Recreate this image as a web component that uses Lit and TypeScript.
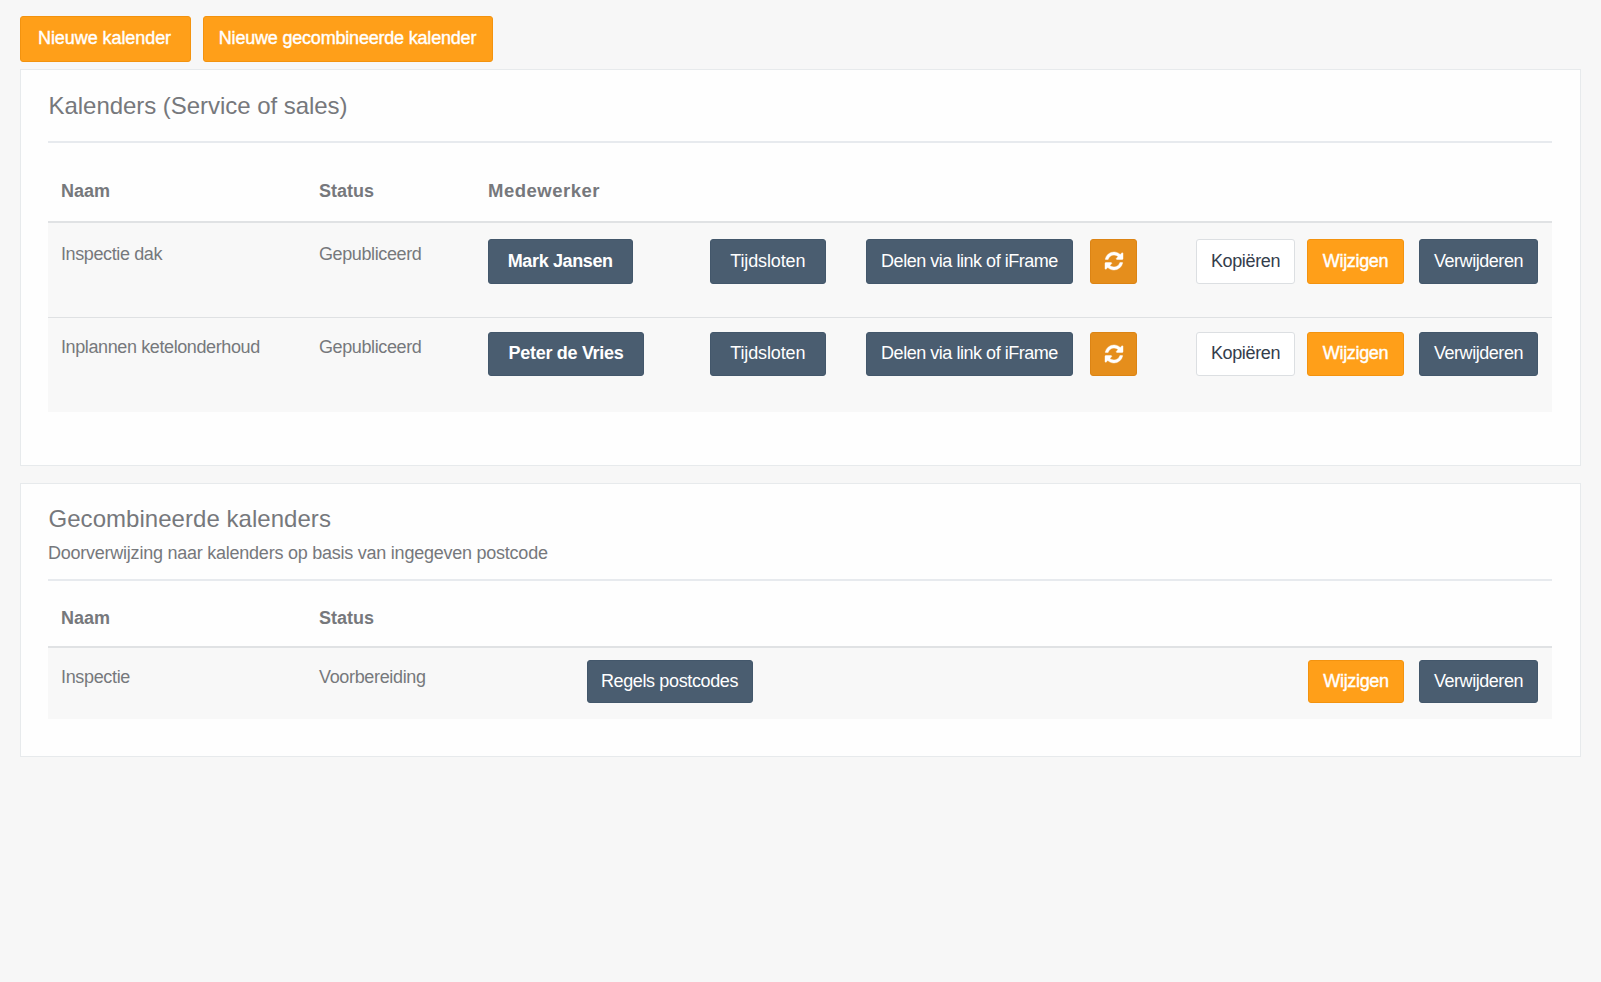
import { LitElement, css, html } from 'lit'
import { customElement, property } from 'lit/decorators.js'

interface Calendar {
  name: string
  status: string
  employee: string
  size: string
}

@customElement('refresh-icon')
export class RefreshIcon extends LitElement {
  render() {
    return html`
      <svg class="icon" viewBox="0 0 1536 1536">
        <path d="M1511 928q0 5-1 7-64 268-268 434.500t-478 166.500q-146 0-282.500-55t-243.500-157l-129 129q-19 19-45 19t-45-19-19-45v-448q0-26 19-45t45-19h448q26 0 45 19t19 45-19 45l-137 137q71 66 161 102t187 36q134 0 250-65t186-179q11-17 53-117 8-23 30-23h192q13 0 22.500 9.500t9.500 22.500zm25-800v448q0 26-19 45t-45 19h-448q-26 0-45-19t-19-45 19-45l138-138q-148-137-349-137-134 0-250 65t-186 179q-11 17-53 117-8 23-30 23h-199q-13 0-22.500-9.500t-9.500-22.500v-7q65-268 270-434.500t480-166.500q146 0 284 55.500t245 156.500l130-129q19-19 45-19t45 19 19 45z"/>
      </svg>
    `
  }

  static get styles() {
    return css`
      :host {
        display: block;
        width: 18px;
        height: 18px;
      }
      .icon {
        display: block;
        width: 100%;
        height: 100%;
        overflow: visible;
        fill: #fff;
        stroke: #fff;
        stroke-width: 35;
      }
    `
  }
}

@customElement('calendar-panel')
export class CalendarPanel extends LitElement {
  @property() heading = ''
  @property() subtitle = ''

  render() {
    return html`
      <section class="panel">
        <h2 class="title">${this.heading}</h2>
        ${this.subtitle ? html`<p class="subtitle">${this.subtitle}</p>` : ''}
        <div class="rule"></div>
        <slot></slot>
      </section>
    `
  }

  static get styles() {
    return css`
      :host {
        display: block;
      }
      .panel {
        box-sizing: border-box;
        height: 100%;
        padding: var(--panel-top, 21px) 28px 0 27px;
        background: #fefefe;
        border: 1px solid #e7eaec;
      }
      .title {
        margin: 0;
        font-size: 24px;
        font-weight: 400;
        letter-spacing: var(--title-spacing, -0.04px);
        line-height: 30px;
        text-indent: 0.5px;
      }
      .subtitle {
        margin: 7px 0 -6px;
        font-size: 18px;
        letter-spacing: -0.24px;
        line-height: 24px;
      }
      .rule {
        height: 2px;
        margin: 20px 0 -1px;
        background: #e7eaee;
      }
    `
  }
}

@customElement('app-root')
export class AppRoot extends LitElement {
  calendars: Calendar[] = [
    { name: 'Inspectie dak', status: 'Gepubliceerd', employee: 'Mark Jansen', size: 'mark' },
    { name: 'Inplannen ketelonderhoud', status: 'Gepubliceerd', employee: 'Peter de Vries', size: 'peter' },
  ]

  renderCalendar(calendar: Calendar) {
    return html`
      <div class="row calendar-row">
        <span class="cell">${calendar.name}</span>
        <span class="cell">${calendar.status}</span>
        <div><button class="btn dark bold ${calendar.size}">${calendar.employee}</button></div>
        <div><button class="btn dark slots">Tijdsloten</button></div>
        <div><button class="btn dark share">Delen via link of iFrame</button></div>
        <div><button class="btn refresh" aria-label="Vernieuwen"><refresh-icon></refresh-icon></button></div>
        <div class="actions">
          <button class="btn light copy">Kopiëren</button>
          <button class="btn orange edit">Wijzigen</button>
          <button class="btn dark remove">Verwijderen</button>
        </div>
      </div>
    `
  }

  render() {
    return html`
      <div class="toolbar">
        <button class="btn orange new">Nieuwe kalender</button>
        <button class="btn orange new-combined">Nieuwe gecombineerde kalender</button>
      </div>

      <calendar-panel class="calendars" heading="Kalenders (Service of sales)">
        <div class="row head">
          <span>Naam</span>
          <span>Status</span>
          <span class="employee">Medewerker</span>
        </div>
        ${this.calendars.map((calendar) => this.renderCalendar(calendar))}
      </calendar-panel>

      <calendar-panel
        class="combined"
        heading="Gecombineerde kalenders"
        subtitle="Doorverwijzing naar kalenders op basis van ingegeven postcode"
      >
        <div class="row head">
          <span>Naam</span>
          <span>Status</span>
        </div>
        <div class="row combined-row">
          <span class="cell">Inspectie</span>
          <span class="cell">Voorbereiding</span>
          <div><button class="btn dark rules">Regels postcodes</button></div>
          <div class="actions">
            <button class="btn orange edit">Wijzigen</button>
            <button class="btn dark remove">Verwijderen</button>
          </div>
        </div>
      </calendar-panel>
    `
  }

  static get styles() {
    return css`
      :host {
        display: block;
        box-sizing: border-box;
        min-height: 982px;
        padding: 16px 20px 0;
        background: #f7f7f7;
        color: #76787c;
        font-family: "Liberation Sans", Arial, sans-serif;
        font-size: 18px;
      }
      .toolbar {
        display: flex;
        gap: 12px;
        margin-bottom: 7px;
      }
      .calendars {
        height: 397px;
        margin-bottom: 17px;
      }
      .combined {
        --panel-top: 20px;
        --title-spacing: 0.04px;
        height: 274px;
      }
      .row {
        display: grid;
        grid-template-columns: 258px 169px 221.5px 156.5px 224px 1fr auto;
        align-items: start;
        box-sizing: border-box;
        padding: 0 14px 0 13px;
      }
      .head {
        height: 81px;
        padding-top: 39px;
        border-bottom: 2px solid #e0e2e4;
        font-weight: 700;
        line-height: 20px;
      }
      .combined .head {
        height: 68px;
        padding-top: 28px;
      }
      .employee {
        font-size: 18.5px;
        letter-spacing: 0.5px;
      }
      .calendar-row {
        height: 94px;
        padding-top: 16px;
        background: #f8f8f8;
      }
      .calendar-row + .calendar-row {
        height: 95px;
        padding-top: 14px;
        border-top: 1px solid #dfe1e3;
      }
      .combined-row {
        grid-template-columns: 258px 267.5px 1fr auto;
        height: 71px;
        padding-top: 12px;
        background: #f8f8f8;
      }
      .cell {
        padding: 5px 0 0;
        letter-spacing: -0.39px;
        line-height: 20px;
      }
      .combined-row .cell {
        padding-top: 7px;
        letter-spacing: -0.34px;
      }
      .actions {
        display: flex;
      }
      .btn {
        display: flex;
        align-items: center;
        justify-content: center;
        box-sizing: border-box;
        height: 45px;
        margin: 0;
        padding: 0 0 2px;
        border: 1px solid;
        border-radius: 3px;
        color: #fff;
        font-family: inherit;
        font-size: 18px;
        letter-spacing: -0.37px;
        line-height: 20px;
        white-space: nowrap;
      }
      .toolbar .btn {
        height: 46px;
        padding-bottom: 3px;
      }
      .calendar-row + .calendar-row .btn {
        height: 44px;
        padding-bottom: 3px;
      }
      .combined-row .btn {
        height: 43px;
        padding-bottom: 2px;
      }
      .dark {
        background: #4a5d70;
        border-color: #43576b;
      }
      .orange {
        background: #ff9f19;
        border-color: #f3930f;
        -webkit-text-stroke: 0.4px #fff;
      }
      .light {
        background: #fff;
        border-color: #dcdfe2;
        color: #343d4b;
      }
      .refresh {
        width: 47px;
        background: #e58e1c;
        border-color: #dc8414;
      }
      .calendar-row .refresh {
        padding-bottom: 1px;
      }
      .calendar-row + .calendar-row .refresh {
        padding-bottom: 0;
      }
      .bold {
        font-weight: 700;
      }
      .new {
        width: 171px;
        padding-right: 2px;
        letter-spacing: -0.07px;
      }
      .new-combined {
        width: 290px;
        padding-right: 1px;
        letter-spacing: -0.2px;
      }
      .mark {
        width: 144.5px;
      }
      .peter {
        width: 156px;
        letter-spacing: -0.3px;
      }
      .slots {
        width: 116.5px;
        letter-spacing: -0.13px;
      }
      .share {
        width: 207px;
        letter-spacing: -0.47px;
      }
      .copy {
        width: 99px;
        margin-right: 12px;
      }
      .edit {
        width: 97px;
        margin-right: 15px;
        letter-spacing: -0.33px;
      }
      .remove {
        width: 119px;
        letter-spacing: -0.45px;
      }
      .combined-row .edit {
        width: 96px;
      }
      .rules {
        width: 166px;
      }
    `
  }
}
